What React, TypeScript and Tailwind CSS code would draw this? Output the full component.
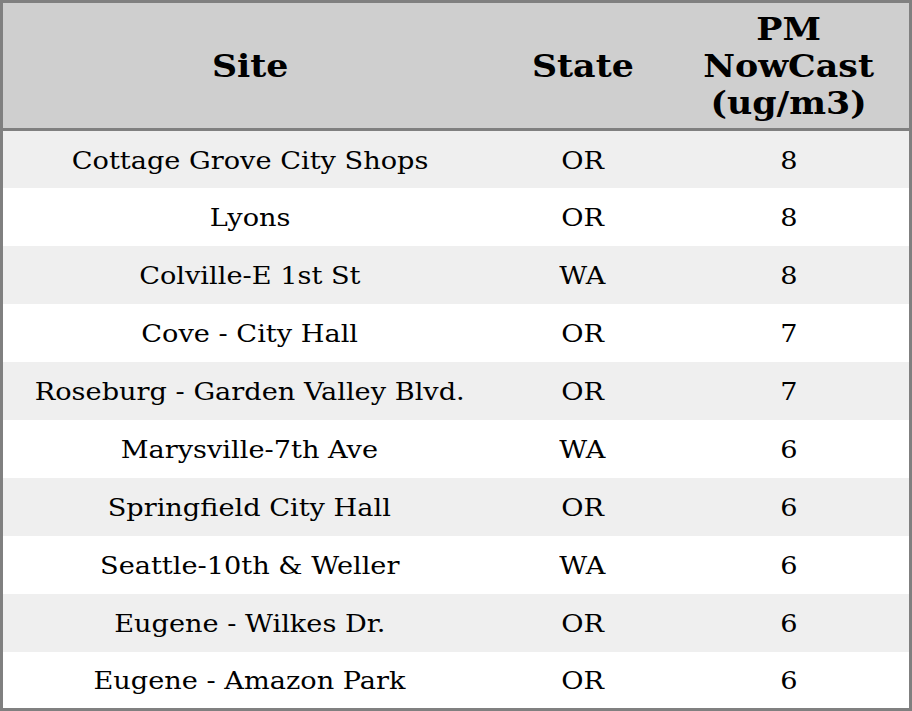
const rows: [string, string, number][] = [
  ["Cottage Grove City Shops", "OR", 8],
  ["Lyons", "OR", 8],
  ["Colville-E 1st St", "WA", 8],
  ["Cove - City Hall", "OR", 7],
  ["Roseburg - Garden Valley Blvd.", "OR", 7],
  ["Marysville-7th Ave", "WA", 6],
  ["Springfield City Hall", "OR", 6],
  ["Seattle-10th & Weller", "WA", 6],
  ["Eugene - Wilkes Dr.", "OR", 6],
  ["Eugene - Amazon Park", "OR", 6],
];

// glyphs in the source render a bit wider than plain DejaVu Serif
const Txt = ({ children }: { children: React.ReactNode }) => (
  <span className="inline-block scale-x-[1.087]">{children}</span>
);

export default function App() {
  return (
    <div className="w-[912px] h-[711px] bg-white font-['DejaVu_Serif',serif] text-black">
      <table className="w-full h-full border-[3px] border-[#808080] border-collapse">
        <thead>
          <tr className="bg-[#cfcfcf] h-[128px] border-b-[3px] border-[#808080] text-[32px] font-bold leading-[37px]">
            <th className="w-[495px] pt-[2px]">
              <Txt>Site</Txt>
            </th>
            <th className="w-[172px] pt-[2px]">
              <Txt>State</Txt>
            </th>
            <th className="pt-[2px]">
              <Txt>
                PM
                <br />
                NowCast
                <br />
                (ug/m3)
              </Txt>
            </th>
          </tr>
        </thead>
        <tbody className="text-[25px]">
          {rows.map((r, i) => (
            <tr key={i} className={i % 2 === 0 ? "bg-[#efefef] h-[58px]" : "bg-white h-[58px]"}>
              <td className="text-center pt-[2px]">
                <Txt>{r[0]}</Txt>
              </td>
              <td className="text-center pt-[2px]">
                <Txt>{r[1]}</Txt>
              </td>
              <td className="text-center pt-[2px]">
                <Txt>{r[2]}</Txt>
              </td>
            </tr>
          ))}
        </tbody>
      </table>
    </div>
  );
}
